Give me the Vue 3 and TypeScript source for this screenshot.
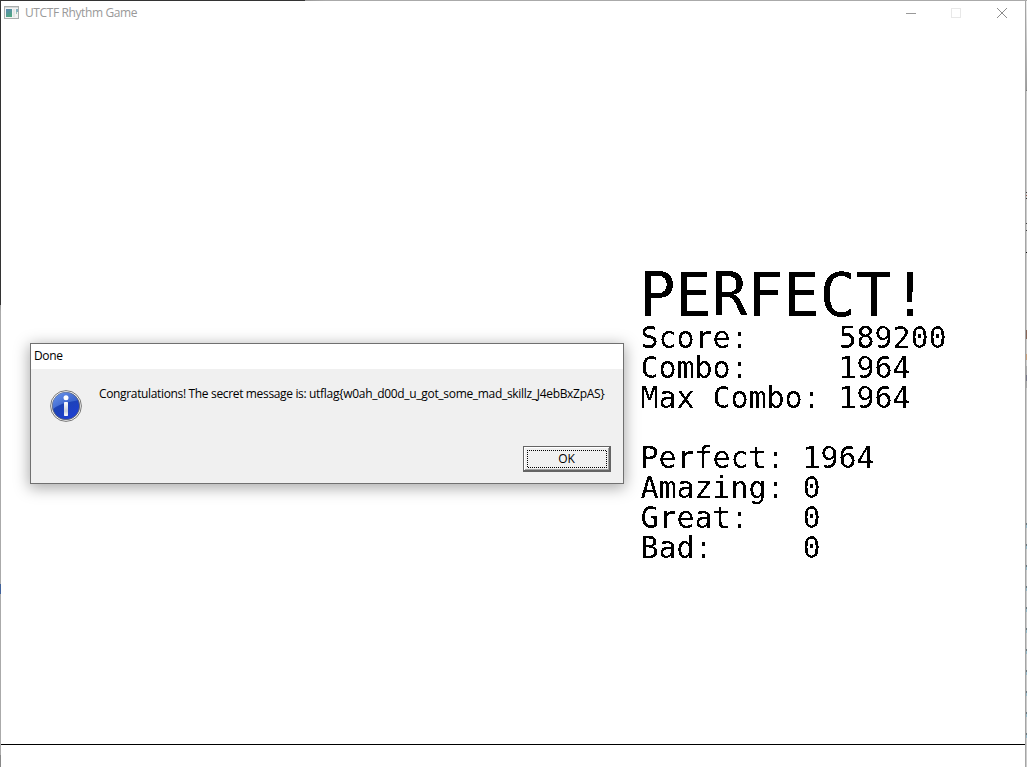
<script setup lang="ts">
interface Stat {
  label: string
  value: number
}

const title = 'UTCTF Rhythm Game'
const flag = 'utflag{w0ah_d00d_u_got_some_mad_skillz_J4ebBxZpAS}'

const totals: Stat[] = [
  { label: 'Score:', value: 589200 },
  { label: 'Combo:', value: 1964 },
  { label: 'Max Combo:', value: 1964 },
]

const judgements: Stat[] = [
  { label: 'Perfect:', value: 1964 },
  { label: 'Amazing:', value: 0 },
  { label: 'Great:', value: 0 },
  { label: 'Bad:', value: 0 },
]
</script>

<template>
  <div class="desktop">
    <!-- Threshold filter that gives the game text hard pixel edges -->
    <svg class="defs" width="0" height="0" aria-hidden="true">
      <filter id="crisp" x="0" y="0" width="100%" height="100%" color-interpolation-filters="sRGB">
        <feComponentTransfer>
          <feFuncA type="discrete" tableValues="0 1" />
        </feComponentTransfer>
      </filter>
    </svg>

    <main class="window">
      <header class="titlebar">
        <svg class="app-icon" width="15" height="13" viewBox="0 0 15 13" shape-rendering="crispEdges">
          <defs>
            <linearGradient id="pane" x1="0" y1="0" x2="0.4" y2="1">
              <stop offset="0" stop-color="#5b87b4" />
              <stop offset="1" stop-color="#4fa583" />
            </linearGradient>
          </defs>
          <rect x="0.5" y="0.5" width="14" height="12" fill="#f3f3f3" stroke="#a9adad" />
          <rect x="1" y="1" width="13" height="1" fill="#d5d9d9" />
          <rect x="2" y="3" width="6" height="8" fill="url(#pane)" />
          <rect x="9" y="3" width="2" height="8" fill="#e3e7e6" />
          <rect x="12" y="3" width="2" height="3" fill="#86b2c0" />
          <rect x="12" y="6" width="1" height="2" fill="#9fc9b5" />
        </svg>
        <span class="title">{{ title }}</span>
        <div class="controls">
          <svg width="46" height="25" viewBox="0 0 46 25"><path d="M18 12.5h10" stroke="#999" /></svg>
          <svg width="45" height="25" viewBox="0 0 45 25"><rect x="17.5" y="7.5" width="9" height="9" fill="none" stroke="#e8e8e8" /></svg>
          <svg width="46" height="25" viewBox="0 0 46 25"><path d="M18 7l10 10M28 7L18 17" stroke="#8c8c8c" stroke-width="1" /></svg>
        </div>
      </header>

      <section class="stage">
        <div class="results">
          <h1>PERFECT!</h1>
          <div class="stats totals">
            <template v-for="s in totals" :key="s.label">
              <span>{{ s.label }}</span><span>{{ s.value }}</span>
            </template>
          </div>
          <div class="stats judgements">
            <template v-for="s in judgements" :key="s.label">
              <span>{{ s.label }}</span><span>{{ s.value }}</span>
            </template>
          </div>
        </div>
      </section>
      <footer class="baseline"></footer>
    </main>
    <aside class="behind"></aside>

    <div class="dialog" role="dialog">
      <div class="dialog-title"><span>Done</span></div>
      <div class="dialog-body">
        <svg class="info" width="32" height="32" viewBox="0 0 32 32">
          <defs>
            <linearGradient id="ball" x1="0" y1="0" x2="0.6" y2="1">
              <stop offset="0" stop-color="#3f70df" />
              <stop offset="0.5" stop-color="#1d43b5" />
              <stop offset="1" stop-color="#1e3fd0" />
            </linearGradient>
            <linearGradient id="shine" x1="0" y1="0" x2="1" y2="1">
              <stop offset="0" stop-color="#7ea7f4" />
              <stop offset="1" stop-color="#2b55c6" />
            </linearGradient>
            <linearGradient id="stem" x1="0" y1="0" x2="0" y2="1">
              <stop offset="0" stop-color="#fff" />
              <stop offset="0.65" stop-color="#c9ced8" />
              <stop offset="1" stop-color="#fff" />
            </linearGradient>
          </defs>
          <circle cx="16" cy="16" r="15.4" fill="#fbfbfb" stroke="#777" stroke-width="1" />
          <circle cx="16" cy="16" r="13.7" fill="url(#ball)" stroke="#67696f" stroke-width="0.9" />
          <path d="M3 19A13.2 13.2 0 0 1 27.8 10.2C20 12 10 13 3 19Z" fill="url(#shine)" opacity="0.75" />
          <circle cx="16" cy="7.8" r="2.5" fill="#fff" />
          <rect x="14" y="12" width="4" height="14" rx="0.7" fill="url(#stem)" />
        </svg>
        <p class="message"><span class="lead">Congratulations! The secret message is: </span><span class="flag">{{ flag }}</span></p>
        <button class="ok" type="button">
          <svg class="focus" width="82" height="20" viewBox="0 0 82 20" shape-rendering="crispEdges">
            <rect x="1.5" y="1.5" width="79" height="17" fill="none" stroke="#000" stroke-dasharray="1 1" stroke-dashoffset="0.5" />
          </svg>
          <span>OK</span>
        </button>
      </div>
    </div>
  </div>
</template>

<style>
body {
  margin: 0;
  overflow: hidden;
}
</style>

<style scoped>
.desktop {
  position: relative;
  display: flex;
  width: 1027px;
  height: 767px;
  box-sizing: border-box;
  padding: 1px 0 0 1px;
  background:
    linear-gradient(90deg, #333 305px, #999 305px, #aaa 325px) 0 0 / 100% 1px no-repeat,
    linear-gradient(#333 305px, #999 305px, #aaa 311px, #aaa 584px, #40619a 584px, #40619a 594px, #aaa 594px, #aaa 755px, #888 755px) 0 0 / 1px 100% no-repeat,
    #fff;
  font-family: 'Open Sans', 'Noto Sans', sans-serif;
  font-size: 12px;
}

.defs {
  position: absolute;
}

.window {
  display: flex;
  flex-direction: column;
  width: 1024px;
  background: #fff;
}

.titlebar {
  display: flex;
  height: 25px;
  align-items: flex-start;
}

.app-icon {
  margin: 5px 6px 0 3px;
}

.title {
  line-height: 24px;
  color: #999;
  white-space: nowrap;
  letter-spacing: -0.39px;
}

.controls {
  display: flex;
  margin-left: auto;
}

.controls svg {
  display: block;
}

.stage {
  flex: 1;
  padding: 239px 0 0 639px;
}

.results {
  width: 340px;
  font-family: 'DejaVu Sans Mono', monospace;
  font-size: 30px;
  line-height: 30px;
  color: #000;
  filter: url(#crisp);
}

h1 {
  margin: 0 0 -2px -0.5px;
  font-size: 60px;
  line-height: 60px;
  font-weight: 400;
  letter-spacing: -0.12px;
}

.stats {
  display: grid;
  padding-left: 0.6px;
  white-space: nowrap;
  letter-spacing: -0.06px;
}

.totals {
  grid-template-columns: 198px 1fr;
  margin-bottom: 30px;
}

.judgements {
  grid-template-columns: 162px 1fr;
}

.baseline {
  height: 22px;
  border-top: 1px solid #000;
}

.behind {
  width: 1px;
  border-left: 1px solid #a5a5a5;
  background:
    linear-gradient(#777, #777) 0 89px / 1px 1px no-repeat,
    linear-gradient(#444, #444) 0 191px / 1px 1px no-repeat,
    linear-gradient(#9a5a4a, #9a5a4a) 0 194px / 1px 1px no-repeat,
    linear-gradient(#333, #333) 0 197px / 1px 1px no-repeat,
    linear-gradient(#444, #444) 0 222px / 1px 1px no-repeat,
    linear-gradient(#444, #444) 0 229px / 1px 1px no-repeat,
    linear-gradient(#111, #111) 0 251px / 1px 1px no-repeat,
    linear-gradient(#886658, #886658) 0 329px / 1px 9px no-repeat,
    linear-gradient(#c9a07c, #c9a07c) 0 353px / 1px 6px no-repeat,
    linear-gradient(#aaa, #aaa) 0 365px / 1px 9px no-repeat,
    linear-gradient(#777789, #777789) 0 374px / 1px 6px no-repeat,
    linear-gradient(#aaa, #aaa) 0 380px / 1px 7px no-repeat,
    repeating-linear-gradient(#6d7a80 0 2px, #94bac9 2px 5px, #ccc 5px 21px) 0 522px / 1px 215px no-repeat,
    linear-gradient(#eee, #999 89px, #ccc 90px);
}

.dialog {
  position: absolute;
  left: 30px;
  top: 343px;
  display: flex;
  flex-direction: column;
  box-sizing: border-box;
  width: 594px;
  height: 141px;
  border: 1px solid #707070;
  background: #f0f0f0;
  box-shadow: 0 3px 14px 1px rgba(0, 0, 0, 0.34);
  color: #000;
}

.dialog-title {
  height: 25px;
  padding-left: 3px;
  background: #fff;
  line-height: 24px;
  letter-spacing: -0.35px;
}

.dialog-body {
  display: grid;
  flex: 1;
  grid-template-columns: 32px minmax(0, 1fr);
  grid-template-rows: 56px 26px;
  column-gap: 17px;
  padding: 21px 12px 0 19px;
}

.info {
  display: block;
}

.message {
  margin: -4px 0 0;
  line-height: 16px;
  white-space: pre;
}

.lead {
  letter-spacing: -0.345px;
}

.flag {
  letter-spacing: -0.31px;
}

.ok {
  grid-column: 2;
  justify-self: end;
  display: grid;
  place-items: center;
  box-sizing: border-box;
  width: 88px;
  height: 26px;
  padding: 0;
  border: 1px solid #646464;
  border-right-width: 2px;
  border-bottom-width: 2px;
  background: #f0f0f0;
  box-shadow: inset 1px 1px #fff, inset -1px -1px #a0a0a0;
  font: inherit;
  color: #000;
}

.ok > * {
  grid-area: 1 / 1;
}
</style>
